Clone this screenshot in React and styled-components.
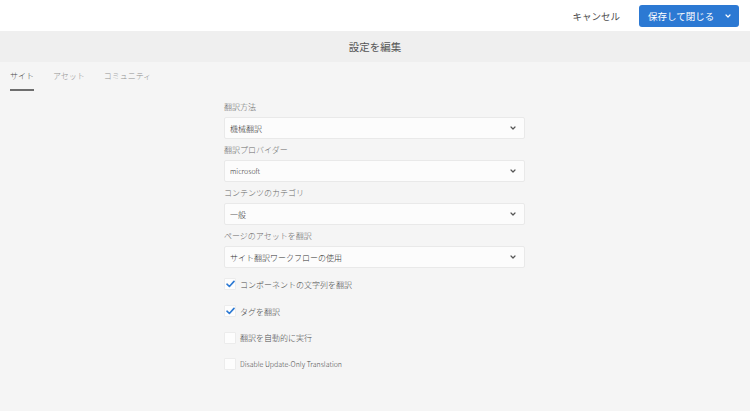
import React from 'react';
import styled, { createGlobalStyle } from 'styled-components';

const GlobalStyle = createGlobalStyle`
  html, body {
    margin: 0;
    padding: 0;
    background: #f5f5f5;
    font-family: "Noto Sans CJK JP", "Noto Sans", sans-serif;
    color: #4b4b4b;
  }
`;

const TopBar = styled.div`
  height: 31px;
  background: #ffffff;
  display: flex;
  align-items: center;
  justify-content: flex-end;
  padding-right: 11px;
  box-sizing: border-box;
`;

const Cancel = styled.span`
  font-size: 9.5px;
  color: #4b4b4b;
  margin-right: 19px;
`;

const SaveButton = styled.div`
  width: 100px;
  height: 22px;
  background: #2c79d3;
  border-radius: 3px;
  display: flex;
  align-items: center;
  color: #fff;
  font-size: 9.5px;
  box-sizing: border-box;
  padding-left: 9px;
`;

const SaveLabel = styled.span`
  flex: 1;
`;

const ButtonChevron = styled.span`
  width: 22px;
  display: flex;
  justify-content: center;
`;

const TitleBar = styled.div`
  height: 31px;
  background: #efefef;
  display: flex;
  align-items: center;
  justify-content: center;
  font-size: 10.5px;
  color: #555;
`;

const Tabs = styled.div`
  display: flex;
  gap: 19px;
  padding-left: 10px;
  height: 30px;
`;

const Tab = styled.div`
  position: relative;
  font-size: 8px;
  font-weight: 300;
  line-height: 10px;
  padding-top: 9px;
  color: ${(p) => (p.$active ? '#4b4b4b' : '#909090')};
  &::after {
    content: '';
    display: ${(p) => (p.$active ? 'block' : 'none')};
    position: absolute;
    left: 0;
    right: 0;
    top: 27px;
    height: 2px;
    background: #6e6e6e;
  }
`;

const Form = styled.div`
  width: 301px;
  margin-left: 224px;
  padding-top: 10px;
  display: flex;
  flex-direction: column;
  gap: 6px;
`;

const Field = styled.div`
  display: flex;
  flex-direction: column;
`;

const Label = styled.div`
  font-size: 8px;
  font-weight: 300;
  line-height: 10px;
  color: #6a6a6a;
  margin-bottom: 5px;
`;

const Select = styled.div`
  height: 22px;
  box-sizing: border-box;
  background: #fcfcfc;
  border: 1px solid #e9e9e9;
  border-radius: 2px;
  display: flex;
  align-items: center;
  justify-content: space-between;
  padding: 0 8px 0 5px;
  font-size: ${(p) => (p.$latin ? '7px' : '8px')};
  font-weight: 300;
  color: #333;
`;

const Checks = styled.div`
  margin-top: -3px;
  display: flex;
  flex-direction: column;
`;

const CheckRow = styled.div`
  height: 26.7px;
  display: flex;
  align-items: center;
  gap: 4px;
`;

const Box = styled.span`
  width: 12px;
  height: 12px;
  box-sizing: border-box;
  border: 1px solid #ececec;
  background: #fdfdfd;
  border-radius: 1px;
  display: flex;
  align-items: center;
  justify-content: center;
`;

const CheckText = styled.span`
  font-size: ${(p) => (p.$latin ? '7px' : '8px')};
  font-weight: 300;
  color: #4b4b4b;
`;

const Chevron = ({ color = '#555' }) => (
  <svg width="6" height="4" viewBox="0 0 6 4">
    <path d="M1 1 L3 3 L5 1" fill="none" stroke={color} strokeWidth="1.2" strokeLinecap="round" strokeLinejoin="round" />
  </svg>
);

const Check = () => (
  <svg width="9" height="8" viewBox="0 0 9 8">
    <path d="M1 4.2 L3.4 6.5 L8 1.4" fill="none" stroke="#2c79d3" strokeWidth="1.6" strokeLinecap="round" strokeLinejoin="round" />
  </svg>
);

const fields = [
  { label: '翻訳方法', value: '機械翻訳' },
  { label: '翻訳プロバイダー', value: 'microsoft', latin: true },
  { label: 'コンテンツのカテゴリ', value: '一般' },
  { label: 'ページのアセットを翻訳', value: 'サイト翻訳ワークフローの使用' },
];

const checks = [
  { label: 'コンポーネントの文字列を翻訳', checked: true },
  { label: 'タグを翻訳', checked: true },
  { label: '翻訳を自動的に実行', checked: false },
  { label: 'Disable Update-Only Translation', checked: false, latin: true },
];

export default function App() {
  return (
    <>
      <GlobalStyle />
      <TopBar>
        <Cancel>キャンセル</Cancel>
        <SaveButton>
          <SaveLabel>保存して閉じる</SaveLabel>
          <ButtonChevron>
            <Chevron color="#ffffff" />
          </ButtonChevron>
        </SaveButton>
      </TopBar>
      <TitleBar>設定を編集</TitleBar>
      <Tabs>
        <Tab $active>サイト</Tab>
        <Tab>アセット</Tab>
        <Tab>コミュニティ</Tab>
      </Tabs>
      <Form>
        {fields.map((f) => (
          <Field key={f.label}>
            <Label>{f.label}</Label>
            <Select $latin={f.latin}>
              <span>{f.value}</span>
              <Chevron />
            </Select>
          </Field>
        ))}
        <Checks>
          {checks.map((c) => (
            <CheckRow key={c.label}>
              <Box>{c.checked && <Check />}</Box>
              <CheckText $latin={c.latin}>{c.label}</CheckText>
            </CheckRow>
          ))}
        </Checks>
      </Form>
    </>
  );
}
